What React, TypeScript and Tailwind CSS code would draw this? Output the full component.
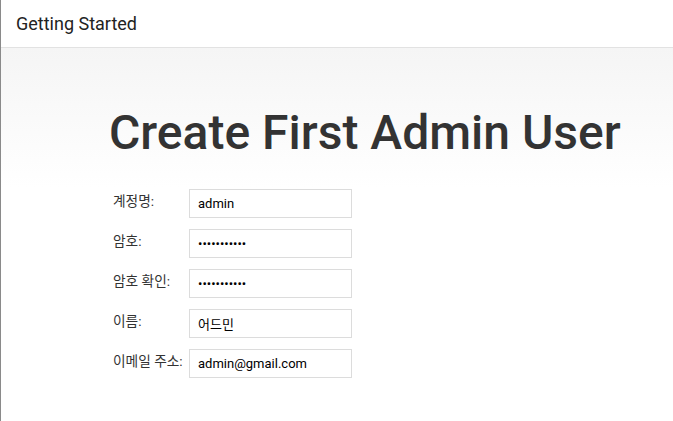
const fields = [
  { label: '계정명:', value: 'admin', type: 'text' },
  { label: '암호:', value: 'adminadmin1', type: 'password' },
  { label: '암호 확인:', value: 'adminadmin1', type: 'password' },
  { label: '이름:', value: '어드민', type: 'text' },
  { label: '이메일 주소:', value: 'admin@gmail.com', type: 'text' },
]

export default function App() {
  return (
    <div
      className="flex h-[421px] w-[673px] flex-col overflow-hidden border-l border-[#8a8a8a] bg-white text-[#333]"
      style={{ fontFamily: 'Roboto, "Noto Sans CJK KR", sans-serif' }}
    >
      <header className="flex h-[48px] shrink-0 items-center border-b border-[#e2e2e2] pl-[15px]">
        <h2 className="text-[18px] text-[#222]">Getting Started</h2>
      </header>
      <main className="flex-1 bg-gradient-to-b from-[#f5f5f5] to-white to-[140px] pl-[108px] pt-[57px]">
        <h1 className="text-[48px] font-medium leading-[56px] text-[#333]">Create First Admin User</h1>
        <form className="mt-[28px] flex flex-col gap-[11px] pl-[4px]">
          {fields.map((f) => (
            <div key={f.label} className="flex items-start">
              <label className="w-[76px] pt-[2px] text-[13.7px] text-[#333]">{f.label}</label>
              <input
                type={f.type}
                defaultValue={f.value}
                readOnly
                className="h-[29px] w-[163px] border border-[#dcdcdc] bg-white px-[8px] text-[13px] text-black outline-none"
              />
            </div>
          ))}
        </form>
      </main>
    </div>
  )
}
